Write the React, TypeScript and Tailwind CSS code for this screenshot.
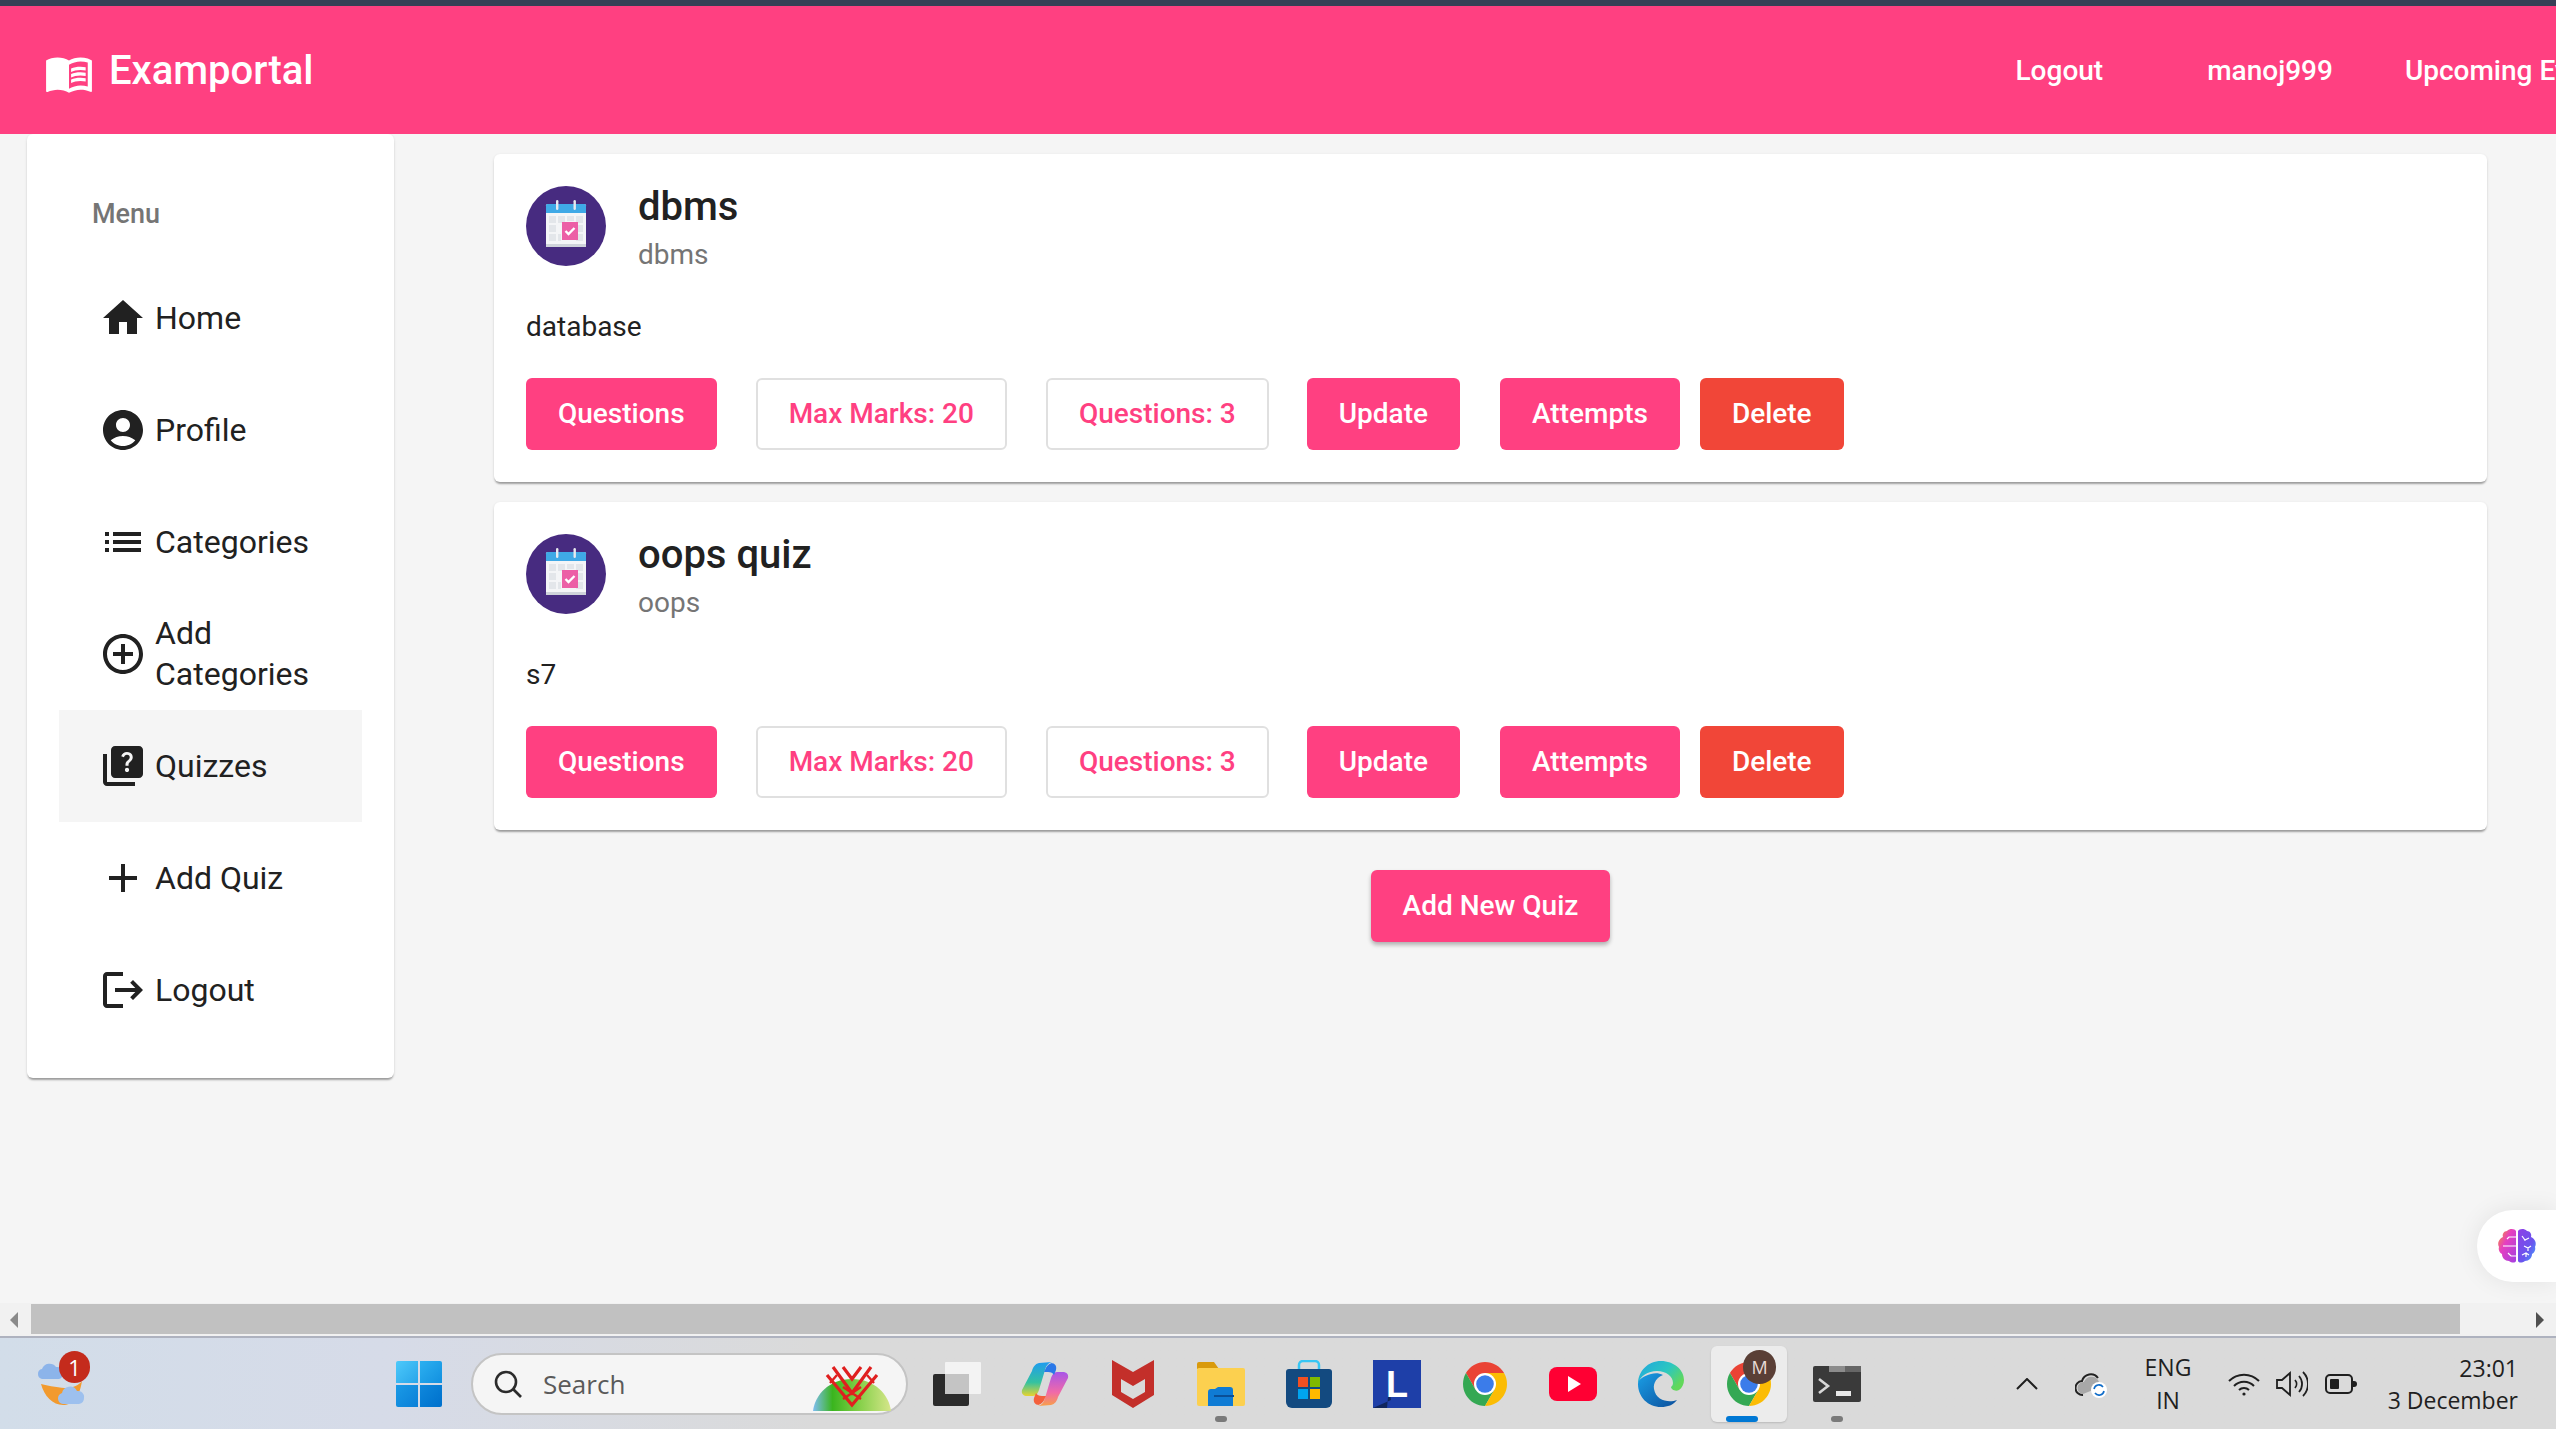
import { MdHome, MdAccountCircle, MdList, MdAddCircleOutline, MdQuiz, MdAdd, MdLogout, MdMenuBook } from "react-icons/md";
import type { ReactNode } from "react";

function Calendar() {
  return (
    <svg viewBox="0 0 80 80" className="w-[80px] h-[80px] shrink-0">
      <circle cx="40" cy="40" r="40" fill="#472b80" />
      <rect x="20" y="18" width="40" height="43" rx="1.5" fill="#f4f5f7" />
      <path d="M20 27v-7.5a1.5 1.5 0 0 1 1.5-1.5h37a1.5 1.5 0 0 1 1.5 1.5V27z" fill="#3fa9e6" />
      <rect x="20" y="58" width="40" height="3" fill="#cfd3da" />
      <g fill="#e3e6ea">
        <rect x="23" y="30" width="7" height="7" /><rect x="32" y="30" width="7" height="7" /><rect x="41" y="30" width="7" height="5" /><rect x="50" y="30" width="7" height="7" />
        <rect x="23" y="39" width="7" height="7" /><rect x="50" y="39" width="7" height="7" />
        <rect x="23" y="48" width="7" height="7" /><rect x="32" y="48" width="3" height="7" /><rect x="50" y="48" width="7" height="7" />
      </g>
      <rect x="36" y="36" width="16" height="18" fill="#ec5fa6" />
      <path d="M39.5 45l3 3 6-6" stroke="#fff" strokeWidth="2.4" fill="none" />
      <rect x="30" y="14" width="2.4" height="10" rx="1.2" fill="#e8eaee" />
      <rect x="47.5" y="14" width="2.4" height="10" rx="1.2" fill="#e8eaee" />
    </svg>
  );
}

function Solid({ children, delete: del }: { children: ReactNode; delete?: boolean }) {
  return (
    <button className={(del ? "bg-[#f14638]" : "bg-[#ff4081]") + " h-[72px] px-[32px] rounded-[6px] text-white text-[28px] font-medium whitespace-nowrap"}>
      {children}
    </button>
  );
}

function Stroked({ children }: { children: ReactNode }) {
  return (
    <button className="h-[72px] px-[31px] rounded-[6px] border-2 border-[#e0e0e0] bg-white text-[#ff4081] text-[28px] font-medium whitespace-nowrap">
      {children}
    </button>
  );
}

function QuizCard({ title, sub, desc }: { title: string; sub: string; desc: string }) {
  return (
    <div className="bg-white rounded-[6px] px-[32px] pt-[32px] pb-[32px] shadow-[0_3px_2px_-1px_rgba(0,0,0,0.3),0_1px_3px_rgba(0,0,0,0.12)]">
      <div className="flex h-[80px]">
        <Calendar />
        <div className="ml-[32px]">
          <div className="text-[40px] leading-[42px] font-medium text-[#212121]">{title}</div>
          <div className="text-[28px] leading-[32px] mt-[11px] text-[#757575]">{sub}</div>
        </div>
      </div>
      <div className="text-[28px] leading-[39px] mt-[41px] text-[#212121]">{desc}</div>
      <div className="flex mt-[32px]">
        <Solid>Questions</Solid>
        <div className="ml-[39px]"><Stroked>Max Marks: 20</Stroked></div>
        <div className="ml-[39px]"><Stroked>Questions: 3</Stroked></div>
        <div className="ml-[38px]"><Solid>Update</Solid></div>
        <div className="ml-[40px]"><Solid>Attempts</Solid></div>
        <div className="ml-[20px]"><Solid delete>Delete</Solid></div>
      </div>
    </div>
  );
}

function NavRow({ icon, label, active }: { icon: ReactNode; label: string; active?: boolean }) {
  return (
    <div className={(active ? "bg-[#f5f5f5] " : "") + "h-[112px] flex items-center pl-[40px] pr-[40px] text-[#212121]"}>
      <span className="w-[48px] h-[48px] shrink-0">{icon}</span>
      <span className="ml-[8px] text-[32px] leading-[41px]">{label}</span>
    </div>
  );
}

function Chrome() {
  return (
    <svg viewBox="0 0 48 48" className="w-[48px] h-[48px]">
      <path d="M43.05 13A22 22 0 0 0 4.95 13L14.47 29.5 24 24 24 13Z" fill="#ea4335" />
      <path d="M4.95 13A22 22 0 0 0 24 46L33.53 29.5 14.47 29.5Z" fill="#34a853" />
      <path d="M24 46A22 22 0 0 0 43.05 13L24 13 33.53 29.5Z" fill="#fbbc04" />
      <circle cx="24" cy="24" r="11" fill="#fff" />
      <circle cx="24" cy="24" r="8.8" fill="#3b7cea" />
    </svg>
  );
}

function Slot({ children }: { children: ReactNode }) {
  return <div className="relative w-[88px] h-[76px] flex items-center justify-center shrink-0">{children}</div>;
}

function Dot() {
  return <span className="absolute bottom-[0px] left-1/2 -ml-[6px] w-[12px] h-[6px] rounded-full bg-[#7a7a7a]" />;
}

export default function App() {
  return (
    <div className="w-[2556px] h-[1429px] overflow-hidden flex flex-col relative bg-[#f5f5f5]" style={{ fontFamily: "Roboto, sans-serif" }}>
      <div className="h-[6px] bg-[#374056] shrink-0" />
      <header className="h-[128px] bg-[#ff4081] flex items-center shrink-0 text-white relative whitespace-nowrap overflow-hidden">
        <MdMenuBook className="ml-[44px] w-[50px] h-[50px] mt-[6px] shrink-0" />
        <span className="ml-[15px] mt-[2px] text-[40px] font-medium shrink-0">Examportal</span>
        <span className="ml-[1702px] mt-[2px] text-[28px] font-medium shrink-0">Logout</span>
        <span className="ml-[104px] mt-[2px] text-[28px] font-medium shrink-0">manoj999</span>
        <span className="ml-[72px] mt-[2px] text-[28px] font-medium shrink-0">Upcoming Events</span>
      </header>
      <main className="h-[1169px] flex shrink-0">
        <aside className="ml-[27px] w-[367px] h-[944px] bg-white rounded-[6px] shrink-0 pt-[52px] pb-[32px] shadow-[0_3px_2px_-1px_rgba(0,0,0,0.3),0_1px_3px_rgba(0,0,0,0.12)]">
          <div className="h-[56px] leading-[56px] pl-[65px] text-[27px] font-medium text-[#757575]">Menu</div>
          <nav className="mt-[20px] mx-[32px]">
            <NavRow icon={<MdHome className="w-full h-full" />} label="Home" />
            <NavRow icon={<MdAccountCircle className="w-full h-full" />} label="Profile" />
            <NavRow icon={<MdList className="w-full h-full" />} label="Categories" />
            <NavRow icon={<MdAddCircleOutline className="w-full h-full" />} label="Add Categories" />
            <NavRow icon={<MdQuiz className="w-full h-full" />} label="Quizzes" active />
            <NavRow icon={<MdAdd className="w-full h-full" />} label="Add Quiz" />
            <NavRow icon={<MdLogout className="w-full h-full" />} label="Logout" />
          </nav>
        </aside>
        <section className="ml-[100px] w-[1993px] pt-[20px] flex flex-col">
          <div className="flex flex-col gap-[20px]">
            <QuizCard title="dbms" sub="dbms" desc="database" />
            <QuizCard title="oops quiz" sub="oops" desc="s7" />
          </div>
          <div className="flex justify-center mt-[40px]">
            <button className="h-[72px] px-[32px] rounded-[6px] bg-[#ff4081] text-white text-[28px] font-medium shadow-[0_3px_4px_rgba(0,0,0,0.28)]">Add New Quiz</button>
          </div>
        </section>
      </main>

      <div className="absolute right-0 top-[1210px] w-[79px] h-[72px] bg-white rounded-l-[36px] shadow-[0_0_24px_rgba(0,0,0,0.08)] flex items-center pl-[20px]">
        <svg viewBox="0 0 40 36" className="w-[40px] h-[36px]">
          <defs>
            <linearGradient id="bl" x1="0" y1="0" x2="1" y2="1"><stop offset="0" stopColor="#f79a2a" /><stop offset="0.4" stopColor="#e63fc0" /><stop offset="1" stopColor="#a43fe0" /></linearGradient>
            <linearGradient id="br" x1="0" y1="0" x2="1" y2="1"><stop offset="0" stopColor="#8f3fe6" /><stop offset="0.6" stopColor="#6a55ee" /><stop offset="1" stopColor="#3fa8ff" /></linearGradient>
          </defs>
          <path d="M19 3c-1-2-6-3-9 0-3 0-5 3-4 6-4 2-6 6-4 10-1 3 1 6 3 7 0 4 3 7 7 7 3 2 6 2 7 0z" fill="url(#bl)" />
          <path d="M21 3c1-2 6-3 9 0 3 0 5 3 4 6 4 2 6 6 4 10 1 3-1 6-3 7 0 4-3 7-7 7-3 2-6 2-7 0z" fill="url(#br)" />
          <g stroke="#fff" strokeWidth="1.2" fill="none">
            <path d="M19 9h-7l-2 2M19 18H6M19 28h-5l-3-3M25 8l3 4 4-2M28 12v1M27 18l4 2 3-2M31 20v3M25 27l4-2 3 2M29 25v4" />
          </g>
        </svg>
      </div>

      <div className="h-[33px] bg-[#f1f1f1] flex shrink-0 relative">
        <div className="w-[31px] flex items-center justify-center pr-[4px]">
          <span className="w-0 h-0 border-y-[8px] border-y-transparent border-r-[8px] border-r-[#8a8a8a]" />
        </div>
        <div className="w-[2429px] h-[30px] mt-[1px] bg-[#c1c1c1]" />
        <div className="flex-1 flex items-center justify-end pr-[12px]">
          <span className="w-0 h-0 border-y-[8px] border-y-transparent border-l-[8px] border-l-[#505050]" />
        </div>
      </div>

      <footer className="h-[93px] border-t-2 border-t-[#aeb2bf] flex items-center shrink-0 relative whitespace-nowrap bg-gradient-to-r from-[#d2dde9] via-[#d6dbe8] via-[15%] to-[#dadada] to-[32%]" style={{ fontFamily: '"Open Sans", sans-serif' }}>
        <div className="relative ml-[35px] w-[56px] h-[56px] shrink-0">
          <svg viewBox="0 0 56 56" className="w-[56px] h-[56px]">
            <path d="M6 28c3 12 12 21 22 21 9 0 16-6 19-24-3 4-9 7-15 7-6 0-18-2-26-4z" fill="#f29a2e" />
            <path d="M3 18a5 5 0 0 1 4-5 8 8 0 0 1 14-2 6 6 0 0 1 7 6 5 5 0 0 1-4 6H7a5 5 0 0 1-4-5z" fill="#8cb4ea" />
            <path d="M23 43a6 6 0 0 1 4-6 8 8 0 0 1 15-2 6 6 0 0 1 7 7 6 6 0 0 1-5 6H28a6 6 0 0 1-5-5z" fill="#9dc0ee" />
          </svg>
          <span className="absolute -top-[5px] left-[24px] w-[31px] h-[32px] rounded-full bg-[#c42b1c] text-white text-[22px] leading-[32px] text-center">1</span>
        </div>
        <div className="ml-[305px] w-[46px] h-[46px] shrink-0 grid grid-cols-2 grid-rows-2 gap-[2px]">
          <span className="bg-gradient-to-br from-[#4cc9fa] to-[#27a5ea] rounded-tl-[2px]" />
          <span className="bg-gradient-to-br from-[#2cb0f0] to-[#1190e0] rounded-tr-[2px]" />
          <span className="bg-gradient-to-br from-[#1a9ae6] to-[#0a80d8] rounded-bl-[2px]" />
          <span className="bg-gradient-to-br from-[#0f88dc] to-[#0070cc] rounded-br-[2px]" />
        </div>
        <div className="ml-[29px] w-[437px] h-[62px] rounded-full bg-[#f5f5f5] border-2 border-[#c4c4c4] flex items-center shrink-0 relative">
          <svg viewBox="0 0 28 28" className="ml-[21px] w-[28px] h-[28px]" fill="none" stroke="#2b2b2b" strokeWidth="2.6">
            <circle cx="12" cy="12" r="10" />
            <path d="M19 19l8 8" />
          </svg>
          <span className="ml-[21px] mt-[2px] text-[26px] text-[#5a5a5a]">Search</span>
          <svg viewBox="0 0 78 46" className="absolute left-[340px] top-[10px] w-[78px] h-[46px]">
            <defs>
              <linearGradient id="dome" x1="0" y1="0" x2="1" y2="0"><stop offset="0" stopColor="#7fbdf2" /><stop offset="0.25" stopColor="#3ab51e" /><stop offset="0.6" stopColor="#86d04a" /><stop offset="1" stopColor="#d6e68a" /></linearGradient>
            </defs>
            <path d="M0 46C2 30 16 14 39 14s37 16 39 32z" fill="url(#dome)" />
            <g stroke="#e01f1f" strokeWidth="3.2" fill="none">
              <path d="M14 10l25 30 25-30M20 2l19 26 19-26M30 2l9 12 9-12" />
              <path d="M24 10l-7 8M54 10l7 8M30 22l18 12M48 22L30 34" strokeWidth="2.4" />
            </g>
          </svg>
        </div>

        <div className="ml-[5px] flex items-center shrink-0">
          <Slot>
            <svg viewBox="0 0 48 44" className="w-[48px] h-[44px]">
              <rect x="0" y="12" width="36" height="32" rx="2" fill="#2a2a2a" />
              <rect x="12" y="0" width="36" height="32" rx="1" fill="#f3f3f3" />
              <rect x="12" y="12" width="24" height="20" fill="#c4c4c4" />
            </svg>
          </Slot>
          <Slot>
            <svg viewBox="0 0 48 44" className="w-[48px] h-[44px]">
              <defs>
                <linearGradient id="c1" x1="0" y1="0" x2="0" y2="1"><stop offset="0" stopColor="#1e9bf0" /><stop offset="0.6" stopColor="#35c2a0" /><stop offset="1" stopColor="#e7d32f" /></linearGradient>
                <linearGradient id="c2" x1="0" y1="0" x2="0" y2="1"><stop offset="0" stopColor="#a855e8" /><stop offset="0.6" stopColor="#f06aa8" /><stop offset="1" stopColor="#f8a048" /></linearGradient>
              </defs>
              <path d="M18 1C14 2 12 5 11 9L1 28C0 32 3 34 6 34H12C15 34 17 31 18 28L24 8C25 4 27 1 31 0Z" fill="url(#c1)" />
              <path d="M30 43C34 42 36 39 37 35L47 16C48 12 45 10 42 10H36C33 10 31 13 30 16L24 36C23 40 21 43 17 44Z" fill="url(#c2)" />
              <path d="M20 1H30C34 1 36 4 35 8L33 13C32 11 30 10 27 10H23L24 8C25 5 27 2 31 1Z" fill="#2a78e8" />
              <path d="M28 43H18C14 43 12 40 13 36L15 31C16 33 18 34 21 34H25L24 36C23 39 21 42 17 43Z" fill="#f4603c" />
            </svg>
          </Slot>
          <Slot>
            <svg viewBox="0 0 42 48" className="w-[42px] h-[48px]">
              <path fillRule="evenodd" d="M0 0l21 12L42 0v35L21 48 0 35zM9 19v13l12 7 12-7V19l-12 7z" fill="#c32f2a" />
            </svg>
          </Slot>
          <Slot>
            <svg viewBox="0 0 48 44" className="w-[48px] h-[44px]">
              <path d="M0 2a2 2 0 0 1 2-2h15l5 7H0z" fill="#d99a0c" />
              <path d="M0 8a2 2 0 0 1 2-2h44a2 2 0 0 1 2 2v34a2 2 0 0 1-2 2H2a2 2 0 0 1-2-2z" fill="#fcd04f" />
              <path d="M8 44V30a3 3 0 0 1 3-3h4l3-2h12a3 3 0 0 1 3 3v16z" fill="#0f7bd4" transform="translate(3)" />
              <rect x="17" y="33" width="20" height="2" fill="#0a4f96" />
            </svg>
            <Dot />
          </Slot>
          <Slot>
            <svg viewBox="0 0 48 48" className="w-[48px] h-[48px]">
              <path d="M14 12V5a4 4 0 0 1 4-4h12a4 4 0 0 1 4 4v7" fill="none" stroke="#37c6f4" strokeWidth="2.5" />
              <path d="M1 12a3 3 0 0 1 3-3h40a3 3 0 0 1 3 3v30a6 6 0 0 1-6 6H7a6 6 0 0 1-6-6z" fill="#134a80" />
              <rect x="13" y="17" width="10" height="10" fill="#f25022" />
              <rect x="25" y="17" width="10" height="10" fill="#7fba00" />
              <rect x="13" y="29" width="10" height="10" fill="#00a4ef" />
              <rect x="25" y="29" width="10" height="10" fill="#ffb900" />
            </svg>
          </Slot>
          <Slot>
            <svg viewBox="0 0 48 48" className="w-[48px] h-[48px]">
              <rect width="48" height="48" fill="#1e3fa8" />
              <path d="M0 48l18-8-2-14-2 22z" fill="#10265e" />
              <text x="24" y="37" textAnchor="middle" fontFamily="Liberation Sans, sans-serif" fontWeight="700" fontSize="36" fill="#fff">L</text>
            </svg>
          </Slot>
          <Slot><Chrome /></Slot>
          <Slot>
            <svg viewBox="0 0 48 34" className="w-[48px] h-[34px]">
              <rect width="48" height="34" rx="8" fill="#ff0033" />
              <path d="M19 9l13 8-13 8z" fill="#fff" />
            </svg>
          </Slot>
          <Slot>
            <svg viewBox="0 0 48 48" className="w-[48px] h-[48px]">
              <defs>
                <linearGradient id="e1" x1="0" y1="0" x2="1" y2="0.6"><stop offset="0" stopColor="#1fa6e0" /><stop offset="0.6" stopColor="#2cc7c0" /><stop offset="1" stopColor="#62d85a" /></linearGradient>
                <linearGradient id="e2" x1="0" y1="0" x2="1" y2="1"><stop offset="0" stopColor="#1a9fe6" /><stop offset="1" stopColor="#0c4f9c" /></linearGradient>
              </defs>
              <path d="M24 1C11 1 1 11 1 24c2-8 10-13 19-13 9 0 16 5 16 12 0 2-1 3-2 4 0 2 4 5 8 3 3-2 5-6 5-10C47 10 37 1 24 1z" fill="url(#e1)" />
              <path d="M1 24c0 13 10 23 23 23 7 0 12-2 16-7-8 3-21 1-23-11-1-6 3-12 9-14-4-2-8-2-12-1C7 16 1 19 1 24z" fill="url(#e2)" />
            </svg>
          </Slot>
          <Slot>
            <div className="absolute inset-x-[6px] top-0 bottom-0 bg-[#ececec] rounded-[6px] shadow-[0_1px_2px_rgba(0,0,0,0.15)]" />
            <div className="relative"><Chrome /></div>
            <span className="absolute left-[38px] top-[4px] w-[33px] h-[34px] rounded-full bg-[#5a3f36] text-[#e8dcd6] text-[18px] leading-[34px] text-center">M</span>
            <span className="absolute left-[21px] bottom-0 w-[32px] h-[6px] rounded-full bg-[#0078d4]" />
          </Slot>
          <Slot>
            <svg viewBox="0 0 48 36" className="w-[48px] h-[36px]">
              <rect width="48" height="36" rx="2" fill="#3a3a3a" />
              <rect x="16" width="16" height="6" fill="#8c8c8c" />
              <rect x="32" width="16" height="6" fill="#666" />
              <path d="M6 13l9 7-9 7" fill="none" stroke="#d8d8d8" strokeWidth="2.6" />
              <rect x="23" y="25" width="15" height="5" fill="#e8e8e8" />
            </svg>
            <Dot />
          </Slot>
        </div>

        <svg viewBox="0 0 22 12" className="ml-[135px] w-[22px] h-[12px] shrink-0" fill="none" stroke="#1f1f1f" strokeWidth="2">
          <path d="M1 11l10-10 10 10" />
        </svg>
        <svg viewBox="0 0 32 28" className="ml-[37px] w-[32px] h-[28px] shrink-0">
          <path d="M8 25a7 7 0 0 1-1-14 9 9 0 0 1 16-3" fill="none" stroke="#222" strokeWidth="2" />
          <path d="M8 24a6 6 0 0 1 1-12 8 8 0 0 1 14-2c2 3 2 6 0 8z" fill="#a8a8a8" />
          <circle cx="24" cy="20" r="8" fill="#fff" />
          <path d="M19 19a5 5 0 0 1 9-2M29 21a5 5 0 0 1-9 2" fill="none" stroke="#0f6cc9" strokeWidth="1.6" />
        </svg>
        <div className="ml-[37px] w-[48px] text-center text-[23px] leading-[33px] text-[#1f1f1f] shrink-0">ENG<br />IN</div>
        <svg viewBox="0 0 32 24" className="ml-[36px] w-[32px] h-[24px] shrink-0" fill="none" stroke="#1f1f1f" strokeWidth="2">
          <path d="M1 9a21 21 0 0 1 30 0M6 14a14 14 0 0 1 20 0M11 18a7 7 0 0 1 10 0" />
          <circle cx="16" cy="22" r="1.6" fill="#1f1f1f" stroke="none" />
        </svg>
        <svg viewBox="0 0 32 28" className="ml-[16px] w-[32px] h-[28px] shrink-0" fill="none" stroke="#1f1f1f" strokeWidth="1.8">
          <path d="M1 10h5l8-7v22l-8-7H1zM19 10a6 6 0 0 1 0 8M23 6a12 12 0 0 1 0 16M27 2a17 17 0 0 1 0 24" />
        </svg>
        <svg viewBox="0 0 32 20" className="ml-[17px] w-[32px] h-[20px] shrink-0" fill="none">
          <rect x="1" y="1" width="26" height="18" rx="4" stroke="#1f1f1f" strokeWidth="2" />
          <rect x="5" y="5" width="9" height="10" rx="1" fill="#1f1f1f" />
          <path d="M28 7h1a3 3 0 0 1 0 6h-1z" fill="#1f1f1f" />
        </svg>
        <div className="ml-[23px] w-[138px] text-right text-[23px] leading-[32px] text-[#1f1f1f] shrink-0">23:01<br />3 December</div>
      </footer>
    </div>
  );
}
